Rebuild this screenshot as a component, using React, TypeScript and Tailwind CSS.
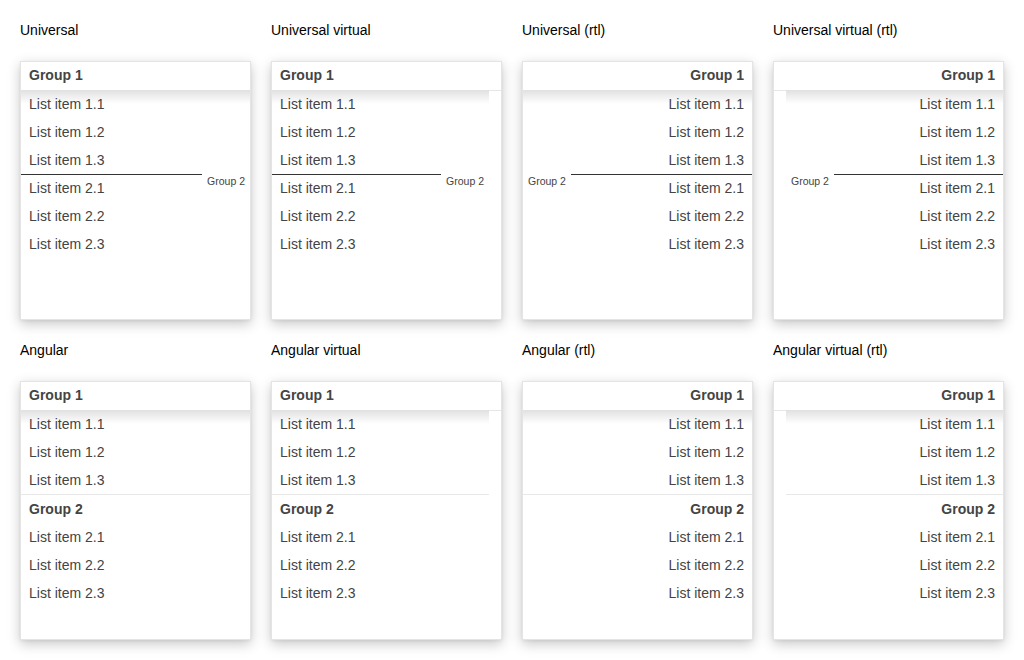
import React from "react";

type Kind = "universal" | "angular";

const groups = [
  { name: "Group 1", items: ["List item 1.1", "List item 1.2", "List item 1.3"] },
  { name: "Group 2", items: ["List item 2.1", "List item 2.2", "List item 2.3"] },
];

const panels: { title: string; kind: Kind; virtual: boolean; rtl: boolean }[] = [
  { title: "Universal", kind: "universal", virtual: false, rtl: false },
  { title: "Universal virtual", kind: "universal", virtual: true, rtl: false },
  { title: "Universal (rtl)", kind: "universal", virtual: false, rtl: true },
  { title: "Universal virtual (rtl)", kind: "universal", virtual: true, rtl: true },
  { title: "Angular", kind: "angular", virtual: false, rtl: false },
  { title: "Angular virtual", kind: "angular", virtual: true, rtl: false },
  { title: "Angular (rtl)", kind: "angular", virtual: false, rtl: true },
  { title: "Angular virtual (rtl)", kind: "angular", virtual: true, rtl: true },
];

function Item({ label }: { label: string }) {
  return <div className="h-[28px] flex items-center px-2 text-[14px] text-[#444]">{label}</div>;
}

function ListCard({ kind, virtual, rtl }: { kind: Kind; virtual: boolean; rtl: boolean }) {
  const [first, second] = groups;

  return (
    <div
      dir={rtl ? "rtl" : "ltr"}
      className="h-[259px] flex flex-col overflow-hidden bg-white border border-[#e4e4e4] shadow-[0_4px_12px_rgba(0,0,0,0.22),0_1px_3px_rgba(0,0,0,0.06)]"
    >
      {/* Sticky header */}
      <div className="h-[28px] shrink-0 flex items-center px-2 pb-px text-[14px] font-bold text-[#444]">
        {first.name}
      </div>

      <div className="flex flex-1 min-h-0">
        <div className="relative flex-1">
          {/* header shadow */}
          <div className="pointer-events-none absolute inset-x-0 top-0 h-[14px] bg-linear-to-b from-black/12 to-transparent" />

          {first.items.map((it) => (
            <Item key={it} label={it} />
          ))}

          {kind === "universal" ? (
            <div className="relative h-0">
              <div className="absolute inset-x-0 top-0 flex items-start">
                <div className="flex-1 border-t border-[#333]" />
                <span className="px-[5px] pt-[1px] text-[10.5px] leading-[13px] text-[#444]">
                  {second.name}
                </span>
              </div>
            </div>
          ) : (
            <div className="h-[29px] flex items-center px-2 border-t border-[#e8e8e8] text-[14px] font-bold text-[#444]">
              {second.name}
            </div>
          )}

          {second.items.map((it) => (
            <Item key={it} label={it} />
          ))}
        </div>

        {/* scrollbar gutter */}
        {virtual && <div className="w-[12px] shrink-0 border-t border-[#e6e6e6]" />}
      </div>
    </div>
  );
}

export default function App() {
  return (
    <div className="min-h-[660px] bg-white pt-[20px] px-[20px] font-['Liberation_Sans',Arial,sans-serif]">
      <div className="grid grid-cols-[repeat(4,231px)] gap-x-[20px] gap-y-[20px]">
        {panels.map((p) => (
          <div key={p.title}>
            <div className="h-5 text-[14px] leading-5 text-black">{p.title}</div>
            <div className="mt-[21px]">
              <ListCard kind={p.kind} virtual={p.virtual} rtl={p.rtl} />
            </div>
          </div>
        ))}
      </div>
    </div>
  );
}
